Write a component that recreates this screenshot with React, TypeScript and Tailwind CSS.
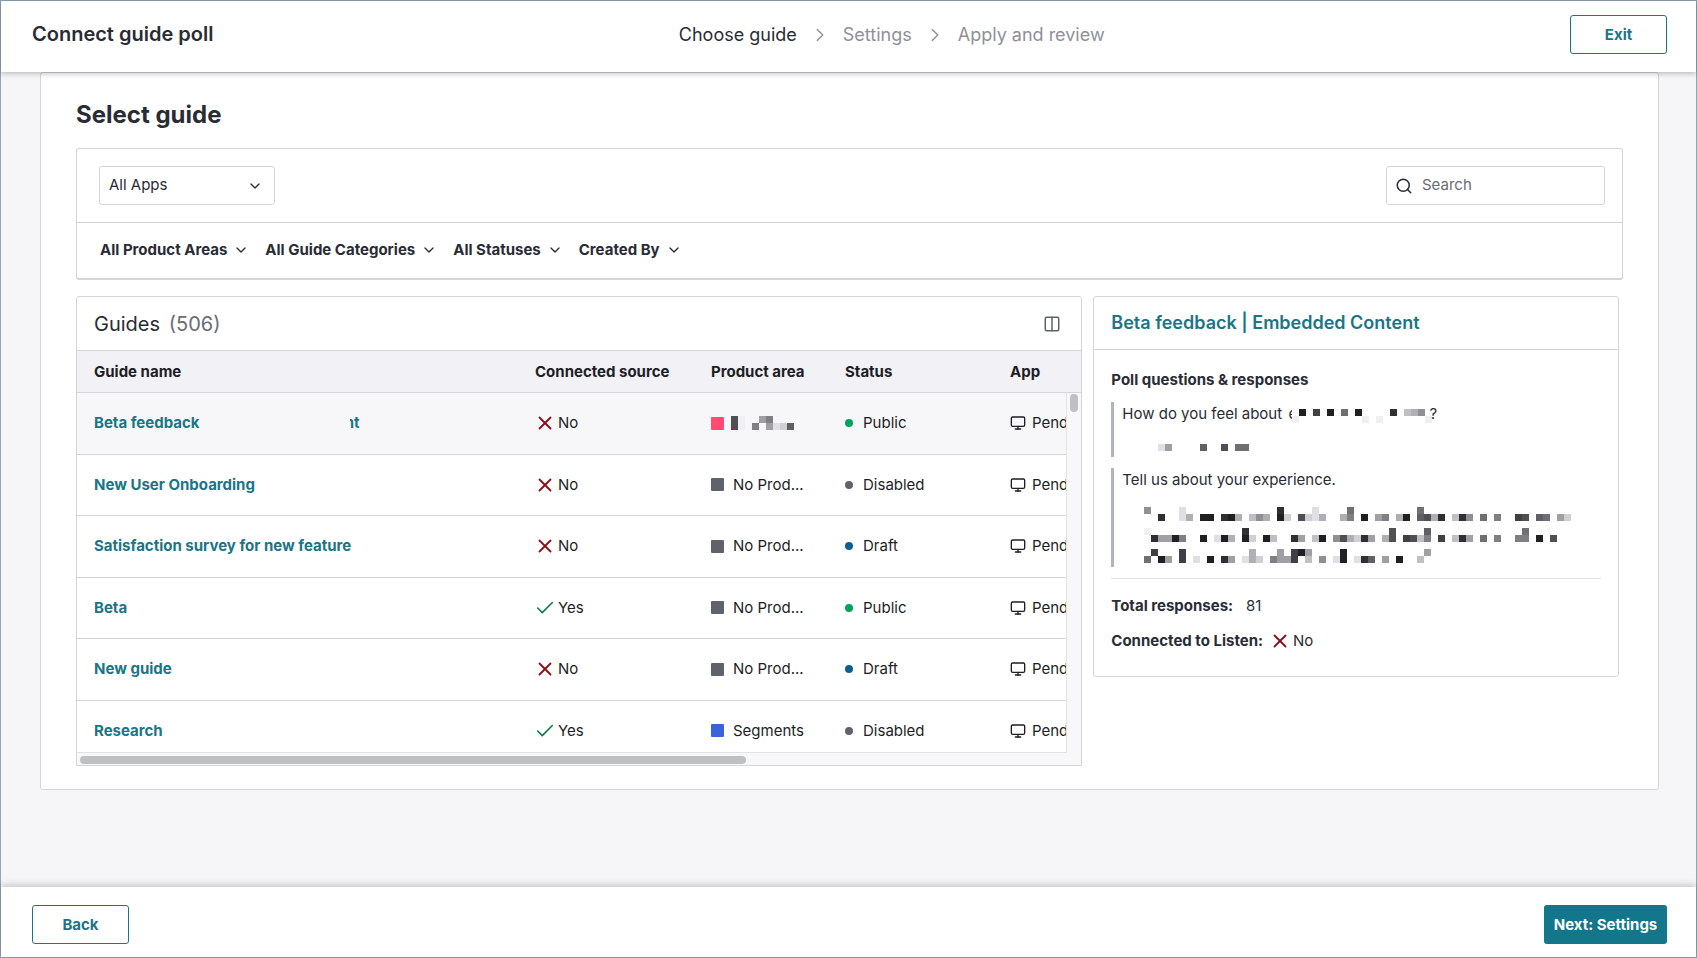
import { Check, ChevronDown, ChevronRight, Columns2, Monitor, Search, X } from 'lucide-react';

interface Guide {
  name: string;
  connected: boolean;
  area: string | null;
  areaColor: string;
  status: 'Public' | 'Disabled' | 'Draft';
}

const guides: Guide[] = [
  { name: 'Beta feedback', connected: false, area: null, areaColor: 'bg-[#ff4c72]', status: 'Public' },
  { name: 'New User Onboarding', connected: false, area: 'No Prod...', areaColor: 'bg-[#5f616b]', status: 'Disabled' },
  { name: 'Satisfaction survey for new feature', connected: false, area: 'No Prod...', areaColor: 'bg-[#5f616b]', status: 'Draft' },
  { name: 'Beta', connected: true, area: 'No Prod...', areaColor: 'bg-[#5f616b]', status: 'Public' },
  { name: 'New guide', connected: false, area: 'No Prod...', areaColor: 'bg-[#5f616b]', status: 'Draft' },
  { name: 'Research', connected: true, area: 'Segments', areaColor: 'bg-[#3b63dc]', status: 'Disabled' },
];

const statusColors = {
  Public: 'bg-[#00a35c]',
  Disabled: 'bg-[#5f616b]',
  Draft: 'bg-[#0b5f93]',
};

const filters = ['All Product Areas', 'All Guide Categories', 'All Statuses', 'Created By'];

// Redacted text. Each row lists "column:shade" cells, shade being one hex digit
const areaMask = ['0:5 1:f 4:a 5:8', '0:5 1:f 3:8 5:a 6:e 7:d 8:6'];

const questionMask = ['1:2 3:4 5:2 7:7 9:2 14:3 16:c 17:b 18:9', '0:f 10:f 12:f 19:f'];

const choiceMask = ['2:e 3:a 8:6 11:5 13:7 14:7'];

const answerMask = [
  '0:9 5:e 19:3 24:e 29:7 39:7',
  '2:3 5:e 6:b 8:2 9:2 11:3 12:2 13:b 15:c 16:9 17:b 19:2 20:d 22:5 23:d 24:e 25:b 28:b 29:8 31:2 33:a 34:8 36:b 37:2 39:6 40:5 41:b 42:3 44:c 45:3 46:9 48:7 50:8 53:4 54:5 56:6 57:7 59:a 60:d',
  '',
  '0:f 14:3 35:5 40:6 54:7',
  '1:3 2:a 3:a 4:2 5:8 8:2 10:e 11:2 12:b 14:2 15:d 17:2 18:c 21:3 22:a 24:c 25:2 27:9 28:5 29:b 30:d 31:3 32:a 34:b 35:5 37:4 38:5 39:c 40:8 42:4 44:c 45:3 46:a 48:7 50:8 53:8 54:8 56:2 58:5',
  '',
  '1:4 5:4 15:b 19:a 21:4 22:2 23:a 28:2 40:a',
  '0:7 2:2 3:a 5:4 7:e 9:2 11:3 12:a 14:e 15:b 16:d 18:8 19:a 20:a 21:4 23:c 25:9 27:e 28:2 30:e 31:3 32:6 34:a 36:2 39:c',
];

function Mask({ rows, cols, className = '' }: { rows: string[]; cols: number; className?: string }) {
  return (
    <svg
      width={cols * 7}
      height={rows.length * 7}
      shapeRendering="crispEdges"
      className={`shrink-0 ${className}`}
      aria-hidden="true"
    >
      {rows.flatMap((row, y) =>
        row.split(' ').filter(Boolean).map((cell) => {
          const [col, shade] = cell.split(':');
          const v = parseInt(shade, 16) * 16;
          return (
            <rect key={`${y}-${col}`} x={Number(col) * 7} y={y * 7} width="7" height="7" fill={`rgb(${v},${v},${v + 4})`} />
          );
        })
      )}
    </svg>
  );
}

function Connected({ value }: { value: boolean }) {
  return (
    <span className="flex items-center gap-0.5">
      {value ? (
        <Check size={22} strokeWidth={1.75} className="text-[#0a7d48]" aria-hidden="true" />
      ) : (
        <X size={22} strokeWidth={2} className="text-[#8b1018]" aria-hidden="true" />
      )}
      {value ? 'Yes' : 'No'}
    </span>
  );
}

function GuideTable() {
  return (
    <section className="relative h-[470px] min-w-0 overflow-hidden rounded-t-[3px] border border-[#d3d5db]">
      <div className="flex h-[54px] items-center justify-between border-b border-[#d3d5db] pl-[17px] pr-5">
        <h2 className="text-[20px]">
          Guides <span className="ml-[3px] text-[#6a6c75]">(506)</span>
        </h2>
        <button type="button" aria-label="Choose columns" className="text-[#5f616b]">
          <Columns2 size={18} />
        </button>
      </div>
      <table className="w-[1210px] table-fixed border-collapse text-left">
        <colgroup>
          <col className="w-[441px]" />
          <col className="w-[176px]" />
          <col className="w-[134px]" />
          <col className="w-[165px]" />
          <col />
        </colgroup>
        <thead>
          <tr className="h-[41px] border-b border-[#d3d5db] bg-[#f1f1f6] text-[#1d1e25]">
            {['Guide name', 'Connected source', 'Product area', 'Status', 'App'].map((heading) => (
              <th key={heading} className="pl-[17px] pt-0.5 font-bold">{heading}</th>
            ))}
          </tr>
        </thead>
        <tbody>
          {guides.map((guide) => (
            <tr
              key={guide.name}
              className="h-[61px] border-b border-[#d3d5db] text-[#1d1e25] first:h-[62px] first:bg-[#f7f7fa] nth-3:h-[62px] nth-5:h-[62px]"
            >
              <td className="pl-[17px]">
                <a href="#" className="flex font-bold text-[#1a7586]">
                  {guide.name}
                  {/* only the tail of the masked name stays visible */}
                  {guide.area === null && (
                    <span className="ml-[150px] flex w-[10px] justify-end overflow-hidden">nt</span>
                  )}
                </a>
              </td>
              <td className="pl-4"><Connected value={guide.connected} /></td>
              <td className="pl-[17px]">
                <span className="flex items-center">
                  <span className={`size-[13px] rounded-[1px] ${guide.areaColor}`} />
                  {guide.area === null ? (
                    <Mask rows={areaMask} cols={9} className="ml-[7px]" />
                  ) : (
                    <span className="ml-[9px]">{guide.area}</span>
                  )}
                </span>
              </td>
              <td className="pl-[17px]">
                <span className="flex items-center gap-[10px]">
                  <span className={`size-2 rounded-full ${statusColors[guide.status]}`} />
                  {guide.status}
                </span>
              </td>
              <td className="pl-[17px]">
                <span className="flex items-center gap-[6px]">
                  <Monitor size={16} aria-hidden="true" />
                  Pendo
                </span>
              </td>
            </tr>
          ))}
        </tbody>
      </table>

      {/* Scrollbars */}
      <div className="absolute bottom-0 right-0 top-[96px] w-[15px] border-l border-[#e3e3e6] bg-[#f8f8fa] pl-[3px] pt-px">
        <div className="h-[18px] w-2 rounded-full bg-[#bfc0c2]" />
      </div>
      <div className="absolute bottom-0 left-0 right-0 h-3 bg-[#f8f8fa] px-[3px] pt-[3px]">
        <div className="h-2 w-2/3 rounded-full bg-[#bfc0c2]" />
      </div>
      <div className="absolute bottom-3 left-0 right-[15px] h-px bg-[#e3e3e6]" />
    </section>
  );
}

function GuideDetails() {
  return (
    <section className="min-w-0 self-start rounded-[3px] border border-[#d3d5db]">
      <h2 className="flex h-[53px] items-center border-b border-[#d3d5db] px-[17px] text-[18px] font-semibold text-[#1a7586]">
        Beta feedback | Embedded Content
      </h2>
      <div className="px-[17px] pb-[23px] pt-[18px]">
        <h3 className="font-bold">Poll questions &amp; responses</h3>
        <div className="mt-[10px] h-[55px] border-l-3 border-[#b1b3bd] pl-2">
          <p className="flex">
            How do you feel about&nbsp;
            <span className="ml-0.5 w-1 overflow-hidden">e</span>
            <Mask rows={questionMask} cols={20} className="-mr-[3px] mt-[7px]" />?
          </p>
          <Mask rows={choiceMask} cols={61} className="ml-[22px] mt-[18px]" />
        </div>
        <div className="mt-[11px] h-[99px] border-l-3 border-[#b1b3bd] pl-2">
          <p>Tell us about your experience.</p>
          <Mask rows={answerMask} cols={61} className="ml-[22px] mt-[15px]" />
        </div>
        <hr className="mb-[15px] mt-[11px] border-[#e3e3e6]" />
        <p>
          <strong className="mr-[13px] font-bold">Total responses:</strong>
          81
        </p>
        <p className="mt-[11px] flex gap-[6px]">
          <strong className="font-bold">Connected to Listen:</strong>
          <Connected value={false} />
        </p>
      </div>
    </section>
  );
}

export default function App() {
  return (
    <div className="flex min-h-screen flex-col border border-[#8fa4b4] bg-[#f6f6f9] font-['Inter',sans-serif] text-[15px] leading-6 text-[#2a2c35]">
      <header className="relative z-10 flex h-[71px] items-center justify-between bg-white pb-[5px] pl-[31px] pr-[29px] shadow-[0_1px_6px_rgba(0,0,0,0.3)]">
        <h1 className="text-[20px] font-semibold">Connect guide poll</h1>
        <ol className="flex items-center gap-3 pt-0.5 text-[18px] text-[#8f9098]">
          <li className="text-[#2a2c35]">Choose guide</li>
          <ChevronRight size={22} strokeWidth={1.5} aria-hidden="true" />
          <li>Settings</li>
          <ChevronRight size={22} strokeWidth={1.5} aria-hidden="true" />
          <li>Apply and review</li>
        </ol>
        <button type="button" className="h-[39px] w-[97px] rounded-[3px] border border-[#1a7586] pt-0.5 font-bold text-[#1a7586]">
          Exit
        </button>
      </header>

      <main className="flex-1">
        <div className="ml-[39px] mr-[37px] rounded-[3px] border border-[#d3d5db] bg-white px-[35px] pb-[23px] pt-[26px]">
          <h2 className="text-[24px] font-bold leading-8">Select guide</h2>

          <div className="mt-[17px] rounded-[3px] border border-b-2 border-[#d3d5db]">
            <div className="flex h-[74px] items-center justify-between border-b border-[#d3d5db] pl-[22px] pr-[17px]">
              <div className="relative">
                <select aria-label="Apps" className="h-[39px] w-[176px] appearance-none rounded-[3px] border border-[#d3d5db] bg-white pb-0.5 pl-[9px]">
                  <option>All Apps</option>
                </select>
                <ChevronDown size={16} className="pointer-events-none absolute right-3 top-3" aria-hidden="true" />
              </div>
              <label className="flex h-[39px] w-[219px] items-center gap-[9px] rounded-[3px] border border-[#d3d5db] px-2">
                <Search size={18} className="shrink-0" aria-hidden="true" />
                <input type="text" placeholder="Search" aria-label="Search" className="w-full min-w-0 pb-0.5 outline-none placeholder:text-[#6a6c75]" />
              </label>
            </div>
            <div className="flex h-[55px] items-center gap-4 pb-0.5 pl-[23px]">
              {filters.map((filter) => (
                <button key={filter} type="button" className="flex items-center gap-[6px] font-bold">
                  {filter}
                  <ChevronDown size={16} aria-hidden="true" />
                </button>
              ))}
            </div>
          </div>

          <div className="mr-1 mt-4 grid grid-cols-[1007fr_526fr] gap-[11px]">
            <GuideTable />
            <GuideDetails />
          </div>
        </div>
      </main>

      <footer className="flex h-[70px] items-center justify-between bg-white pl-[31px] pr-[29px] pt-1 shadow-[0_-1px_8px_rgba(0,0,0,0.25)]">
        <button type="button" className="h-[39px] w-[97px] rounded-[3px] border border-[#1a7586] pt-0.5 font-bold text-[#1a7586]">
          Back
        </button>
        <button type="button" className="h-[39px] w-[123px] rounded-[3px] bg-[#14768a] pt-0.5 font-bold text-white">
          Next: Settings
        </button>
      </footer>
    </div>
  );
}
